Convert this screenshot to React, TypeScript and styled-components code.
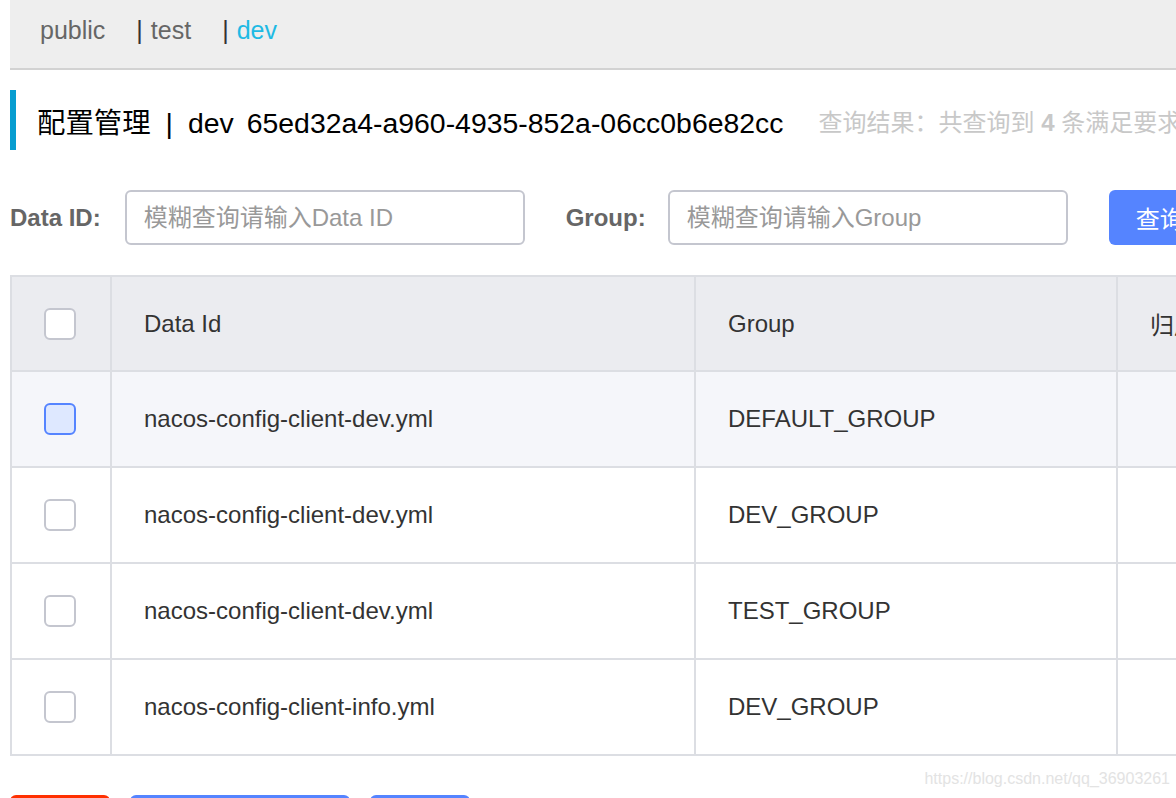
import React from "react";
import styled, { createGlobalStyle } from "styled-components";

const Global = createGlobalStyle`
  html, body { margin: 0; padding: 0; background: #fff; }
  body { width: 1176px; height: 798px; overflow: hidden; font-family: "Liberation Sans", "Noto Sans CJK SC", Arial, sans-serif; }
  #root { height: 798px; }
`;

const Page = styled.div`
  position: relative;
  height: 798px;
  padding-left: 10px;
  overflow: hidden;
  box-sizing: border-box;
`;

const TopBar = styled.div`
  height: 68px;
  box-sizing: content-box;
  background: #eeeeee;
  border-bottom: 2px solid #d2d2d2;
  display: flex;
  align-items: center;
  padding: 0 0 0 30px;
`;

const NsTabs = styled.div`
  display: flex;
  align-items: center;
  margin-top: -8px;
  white-space: nowrap;
`;

const NsItem = styled.span<{ $active?: boolean }>`
  font-size: 25px;
  color: ${(p) => (p.$active ? "#1ebae4" : "#666")};
  margin-right: 31px;
`;

const Sep = styled.span`
  color: #333;
  margin-right: 8px;
`;

const TitleRow = styled.div`
  margin-top: 20px;
  height: 60px;
  border-left: 6px solid #079dd0;
  display: flex;
  align-items: center;
  padding-left: 21px;
  white-space: nowrap;
`;

const Title = styled.span`
  font-size: 28.4px;
  color: #000;
  flex-shrink: 0;
`;

const TitleBar = styled.span`
  margin: 0 15px;
`;

const Uuid = styled.span`
  margin-left: 13px;
`;

const Summary = styled.span`
  margin-left: 35px;
  font-size: 24px;
  color: #c8c8c8;
  flex-shrink: 0;
  b { font-weight: bold; }
`;

const FilterRow = styled.div`
  margin-top: 40px;
  display: flex;
  align-items: center;
  height: 55px;
  white-space: nowrap;
`;

const Label = styled.label<{ $gap: number }>`
  font-size: 24px;
  font-weight: bold;
  color: #666;
  margin-right: ${(p) => p.$gap}px;
  flex-shrink: 0;
`;

const Input = styled.input`
  width: 400px;
  height: 55px;
  flex-shrink: 0;
  box-sizing: border-box;
  border: 2px solid #c4c6cf;
  border-radius: 6px;
  padding: 0 17px;
  font-size: 24px;
  font-family: inherit;
  color: #333;
  margin-right: 41px;
  outline: none;
  &::placeholder { color: #999; }
`;

const PrimaryButton = styled.button`
  height: 55px;
  min-width: 120px;
  padding: 0 27px;
  border: none;
  border-radius: 6px;
  background: #5584ff;
  color: #fff;
  font-size: 24px;
  font-family: inherit;
  text-align: left;
  flex-shrink: 0;
`;

const Table = styled.table`
  margin-top: 30px;
  border-collapse: collapse;
  width: 1400px;
  table-layout: fixed;
  border: 2px solid #dcdee3;
`;

const Th = styled.th<{ $w?: number }>`
  box-sizing: border-box;
  width: ${(p) => (p.$w ? `${p.$w}px` : "auto")};
  height: 95px;
  background: #ebecf0;
  border: 2px solid #dcdee3;
  text-align: left;
  font-weight: normal;
  font-size: 24px;
  color: #333;
  padding: 0 0 0 32px;
  white-space: nowrap;
  overflow: hidden;
`;

const CheckTh = styled(Th)`
  padding: 0;
  text-align: center;
`;

const Tr = styled.tr<{ $hover?: boolean }>`
  background: ${(p) => (p.$hover ? "#f5f6fa" : "#fff")};
`;

const Td = styled.td`
  box-sizing: border-box;
  height: 96px;
  border: 2px solid #dcdee3;
  font-size: 24px;
  color: #333;
  padding: 0 0 0 32px;
  white-space: nowrap;
  overflow: hidden;
`;

const CheckTd = styled(Td)`
  padding: 0;
  text-align: center;
`;

const Checkbox = styled.span<{ $hover?: boolean }>`
  display: inline-block;
  vertical-align: middle;
  width: 32px;
  height: 32px;
  box-sizing: border-box;
  border-radius: 6px;
  border: 2px solid ${(p) => (p.$hover ? "#5584ff" : "#c4c6cf")};
  background: ${(p) => (p.$hover ? "#dee8ff" : "#fff")};
  margin-left: -2px;
`;

const Actions = styled.div`
  margin-top: 39px;
  display: flex;
  gap: 20px;
`;

const ActionButton = styled.button<{ $danger?: boolean; $w: number }>`
  width: ${(p) => p.$w}px;
  height: 55px;
  flex-shrink: 0;
  border: none;
  border-radius: 6px;
  background: ${(p) => (p.$danger ? "#ff3000" : "#5584ff")};
  color: #fff;
  font-size: 24px;
  font-family: inherit;
`;

const Watermark = styled.div`
  position: absolute;
  right: 6px;
  bottom: 10px;
  font-size: 16px;
  color: #e3e3e3;
  font-family: "Liberation Sans", Arial, sans-serif;
`;

const rows = [
  { id: "nacos-config-client-dev.yml", group: "DEFAULT_GROUP" },
  { id: "nacos-config-client-dev.yml", group: "DEV_GROUP" },
  { id: "nacos-config-client-dev.yml", group: "TEST_GROUP" },
  { id: "nacos-config-client-info.yml", group: "DEV_GROUP" },
];

export default function App() {
  return (
    <>
      <Global />
      <Page>
        <TopBar>
          <NsTabs>
            <NsItem>public</NsItem>
            <NsItem>
              <Sep>|</Sep>test
            </NsItem>
            <NsItem $active>
              <Sep>|</Sep>dev
            </NsItem>
          </NsTabs>
        </TopBar>
        <TitleRow>
          <Title>
            配置管理<TitleBar>|</TitleBar>dev<Uuid>65ed32a4-a960-4935-852a-06cc0b6e82cc</Uuid>
          </Title>
          <Summary>
            查询结果：共查询到 <b>4</b> 条满足要求的配置。
          </Summary>
        </TitleRow>
        <FilterRow>
          <Label $gap={24}>Data ID:</Label>
          <Input placeholder="模糊查询请输入Data ID" />
          <Label $gap={22}>Group:</Label>
          <Input placeholder="模糊查询请输入Group" />
          <PrimaryButton>查询</PrimaryButton>
        </FilterRow>
        <Table>
          <thead>
            <tr>
              <CheckTh $w={100}>
                <Checkbox />
              </CheckTh>
              <Th $w={584}>Data Id</Th>
              <Th $w={422}>Group</Th>
              <Th>归属应用：</Th>
            </tr>
          </thead>
          <tbody>
            {rows.map((r, i) => (
              <Tr key={i} $hover={i === 0}>
                <CheckTd>
                  <Checkbox $hover={i === 0} />
                </CheckTd>
                <Td>{r.id}</Td>
                <Td>{r.group}</Td>
                <Td></Td>
              </Tr>
            ))}
          </tbody>
        </Table>
        <Actions>
          <ActionButton $danger $w={100}>删除</ActionButton>
          <ActionButton $w={220}>导出选中的配置</ActionButton>
          <ActionButton $w={100}>克隆</ActionButton>
        </Actions>
        <Watermark>https://blog.csdn.net/qq_36903261</Watermark>
      </Page>
    </>
  );
}
